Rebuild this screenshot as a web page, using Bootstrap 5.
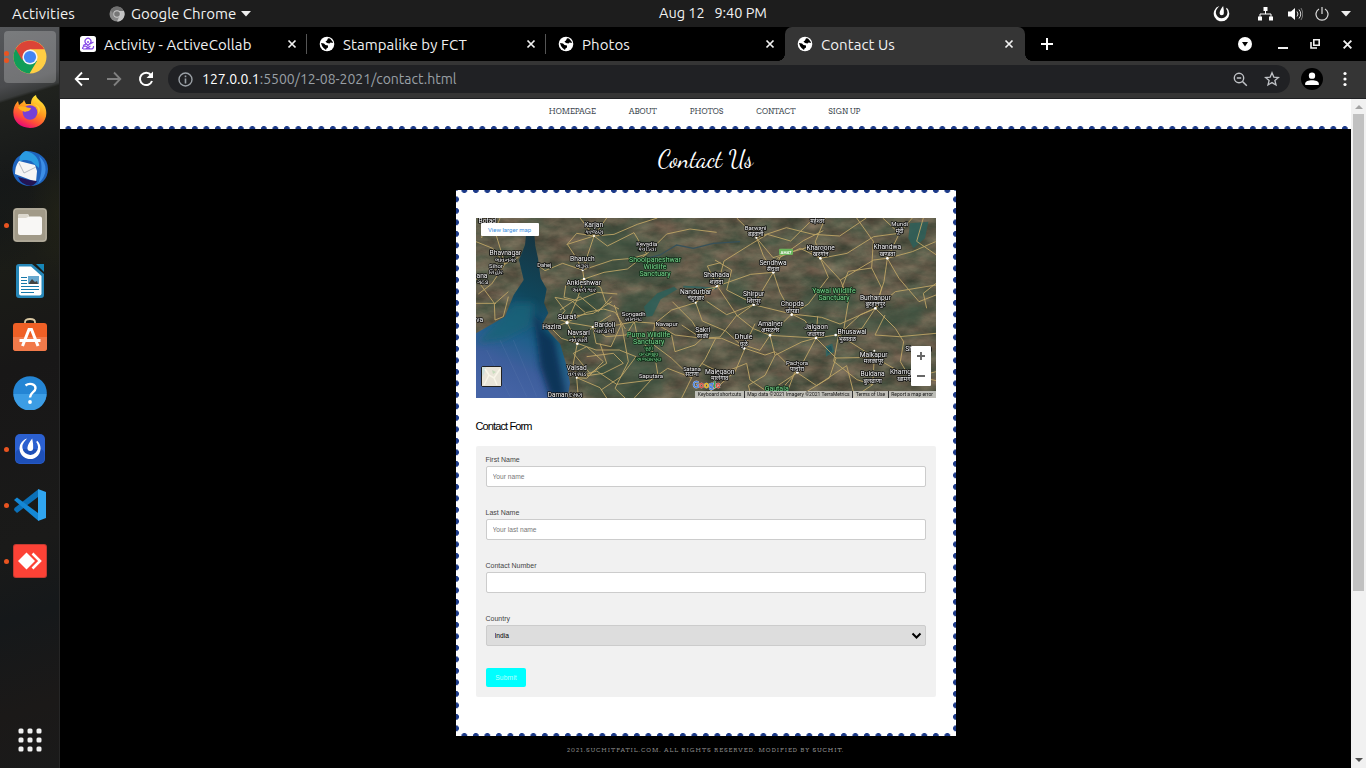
<!DOCTYPE html>
<html lang="en">
<head>
<meta charset="utf-8">
<meta name="viewport" content="width=device-width, initial-scale=1">
<title>Contact Us</title>
<link href="https://cdn.jsdelivr.net/npm/bootstrap@5.3.0/dist/css/bootstrap.min.css" rel="stylesheet">
<style>
  :root { --chrome: #353535; --dot: #1b3988; }
  body { font-family: "Ubuntu", "Noto Sans", "Open Sans", sans-serif; background: #000; line-height: 1; }
  svg { display: block; flex: none; }
  .topbar { height: 27px; background: #1d1d1d; color: #f2f2f2; font-size: 15px; }
  .topbar .clock { left: 659px; top: 6px; white-space: pre; font-size: 14.5px; letter-spacing: -.03px; }
  .appmenu { margin-left: 34px; }
  .tray { padding-right: 15px; }
  .dock { width: 60px; padding-top: 2px; border-right: 1px solid #262626;
    background:
      radial-gradient(ellipse 40px 60px at 0 190px, #14181866, transparent),
      radial-gradient(ellipse 30px 70px at 58px 185px, #2a2a1466, transparent),
      linear-gradient(163deg, #56585b 0, #4a4b4e 58px, #393b3b 70px, #20221e 73px, #1c1e1c 105px, #161818 150px, #1b1c17 230px, #181717 330px, #1a1a19 500px, #15181a 570px, #1b1918 660px, #1a1a1a 100%); }
  .dock-item { height: 56px; flex: none; }
  .dock-item.active::before { content: ""; position: absolute; left: 4px; top: 2px; width: 52px; height: 52px; border-radius: 4px; background: #ffffff38; }
  .dock-item svg { position: relative; }
  .run { position: absolute !important; left: 4px; top: 50%; width: 5px; height: 5px; margin-top: -2.5px; border-radius: 50%; background: #e95420; }
  .run.two { margin-top: -6px; box-shadow: 0 7px #e95420; }
  .tabstrip { height: 34px; background: #000; padding-left: 8px; color: #f1f1f1; font-size: 15px; }
  .tab { width: 239px; padding: 0 10px 0 12px; }
  .tab-sep::after { content: ""; position: absolute; right: 0; top: 7px; width: 1px; height: 20px; background: #555; }
  .tab-title { margin-left: 8px; letter-spacing: .08px; }
  .tab-on { width: 240px; background: var(--chrome); border-radius: 7px 7px 0 0; padding-right: 11px; }
  .tab-on::before, .tab-on::after { content: ""; position: absolute; bottom: 0; width: 7px; height: 7px; }
  .tab-on::before { left: -7px; background: radial-gradient(circle at 0 0, transparent 6.6px, var(--chrome) 7px); }
  .tab-on::after { right: -7px; background: radial-gradient(circle at 100% 0, transparent 6.6px, var(--chrome) 7px); }
  .toolbar { height: 38px; background: var(--chrome); border-bottom: 1px solid #202124; padding: 0 14px 1px; }
  .omni { height: 28px; border-radius: 14px; background: #202124; color: #9aa0a6; font-size: 14px; margin: 0 8px 0 14px; padding: 0 10px; }
  .url { margin-left: 9px; }
  .url b { font-weight: 400; color: #fff; }
  .avatar { width: 28px; height: 28px; background: #000; }
  .site-nav { height: 30px; background: #fff; padding-top: 8px; font: 7.7px "Arvo", "DejaVu Serif", serif; color: #454d55; }
  .dots-bottom { background: radial-gradient(circle at 50% 100%, var(--dot) 2.6px, transparent 3.4px) 2.6px 100% / 11.5px 4px repeat-x #fff; }
  .site-nav a { color: inherit; text-decoration: none; position: absolute; }
  .headline { height: 61px; color: #fff; font: 24.3px "Dancing Script", "Liberation Serif", serif; padding-bottom: 1px; }
  .stamp { width: 500px; height: 546px; padding: 28px 20px 0;
    background:
      radial-gradient(circle at 50% 0, var(--dot) 2.6px, transparent 3.4px) 2.6px 0 / 11.5px 4px repeat-x,
      radial-gradient(circle at 50% 100%, var(--dot) 2.6px, transparent 3.4px) 2.6px 100% / 11.5px 4px repeat-x,
      radial-gradient(circle at 0 50%, var(--dot) 2.6px, transparent 3.4px) 0 3.6px / 4px 11.5px repeat-y,
      radial-gradient(circle at 100% 50%, var(--dot) 2.6px, transparent 3.4px) 100% 3.6px / 4px 11.5px repeat-y, #fff; }
  .map-box { height: 180px; }
  .map-link { left: 5px; top: 5px; width: 58px; height: 13px; font: 6px "Roboto", sans-serif; color: #3a8fe0; border-radius: 1px; }
  .map-zoom { right: 5px; top: 128px; width: 20px; height: 40px; border-radius: 1px; }
  .map-thumb { left: 5px; top: 148px; width: 21px; height: 21px; border: 1px solid #222; border-radius: 2px; }
  .map-credit { right: 0; bottom: 0; height: 7px; font: 5px/7px "Roboto", sans-serif; color: #111; background: #d5d5d2d0; white-space: nowrap; }
  .map-credit span { padding: 0 2.5px; }
  .map-credit span + span { border-left: 1px solid #333; }
  .form-title { font: 11px "Liberation Sans", sans-serif; letter-spacing: -.88px; color: #000; margin: 22px 0 0; height: 26px; }
  .contact-form { background: #f1f1f1; border-radius: 2px; height: 251px; padding: 10px; font: 7px/8px "Liberation Sans", sans-serif; color: #444; }
  .field-block { height: 53px; }
  .contact-form .form-label { font-size: 7px; margin: 0; height: 10px; display: block; }
  .contact-form .form-control, .contact-form .form-select { height: 21px; min-height: 0; font-size: 6.65px; line-height: 8px; padding: 0 6px; border: 1px solid #ccc; border-radius: 2px; color: #000; }
  .contact-form .form-control::placeholder { color: #777; }
  .contact-form .form-select { background-color: #ddd; background-position: right 3px center; background-size: 11px 11px; padding-left: 8px;
    background-image: url("data:image/svg+xml,%3csvg xmlns='http://www.w3.org/2000/svg' viewBox='0 0 11 11'%3e%3cpath fill='none' stroke='%23000' stroke-width='2' d='M1.500 3.500l4 4 4-4'/%3e%3c/svg%3e"); }
  .send { width: 40px; height: 19px; background: #0ff; border: 0; border-radius: 2px; color: #b9ffff; font-size: 6.7px; letter-spacing: .1px; padding: 1px 0 0 1px; }
  .foot { font: 6px "Arvo", "DejaVu Serif", serif; letter-spacing: .97px; color: #858585; margin-top: 10px; white-space: nowrap; }
  .foot a { color: #959595; text-decoration: none; }
  .scroller { width: 15px; background: #f1f1f1; padding: 15px 2px 0; }
  .scroller .thumb { height: 477px; background: #c1c1c1; }
  .scroller i { position: absolute; left: 3.5px; border: 4px solid transparent; }
  .scroller .up { top: 2px; border-bottom-color: #a3a3a3; }
  .scroller .dn { bottom: 2px; border-top-color: #505050; }
</style>
</head>
<body class="vh-100 overflow-hidden d-flex flex-column">
<svg width="0" height="0" class="position-absolute">
  <symbol id="x" viewBox="0 0 10 10"><path d="M1.5 1.5l7 7M8.500 1.500l-7 7" stroke="#f1f1f1" stroke-width="1.700"/></symbol>
  <symbol id="globe" viewBox="0 0 16 16"><circle cx="8" cy="8" r="7.300" fill="#fff"/><path d="M9 2.200l2 .3 2.500 3 .5 1.500-2.500-.5-1 1-2.500-.5-1.500-1.500 1.500-1zM2 7l3 .5 1.500 1.500 2.500.5 0 2-1.500 1-.5 1.500L4.500 12 3 10z" fill="#000"/></symbol>
  <symbol id="swirl" viewBox="0 0 24 24"><path fill-rule="evenodd" d="M9 1.500A11 11 0 1 0 19.500 4L18.500 5.200A8.200 8.200 0 1 1 5.500 5.800Q7 3.500 9 1.500z" fill="#fff"/><path d="M4.500 15.500A8.500 8.500 0 0 0 20.500 14Q21 22 12.500 22.500 6 22 4.500 15.500z" fill="#fff"/><path d="M14.300 1.500Q15.500 7 15.300 11.500a3 3 0 0 1-6 0Q9.500 7.500 14.300 1.500z" fill="#fff"/></symbol>
</svg>

<header class="topbar d-flex align-items-center position-relative ps-2">
  <span class="ms-1" style="letter-spacing:.15px">Activities</span>
  <span class="appmenu d-flex align-items-center">
    <svg width="16" height="16" viewBox="0 0 16 16"><circle cx="8" cy="8" r="7.500" fill="#888"/><path d="M8 5h7A7.500 7.500 0 0 1 8 15.500L11 9z" fill="#c4c4c4"/><path d="M1.500 4A7.500 7.500 0 0 1 14.800 5H8L5 9z" fill="#707070"/><circle cx="8" cy="8" r="3.700" fill="#ccc"/><circle cx="8" cy="8" r="2.800" fill="#777"/></svg>
    <span style="margin-left:6px">Google Chrome</span>
    <svg width="10" height="6" viewBox="0 0 10 6" style="margin-left:5px"><path d="M0 0h10L5 5.500z" fill="#eee"/></svg>
  </span>
  <span class="clock position-absolute">Aug 12   9:40 PM</span>
  <span class="tray ms-auto d-flex align-items-center">
    <svg width="17" height="17" style="margin-right:28px"><use href="#swirl"/></svg>
    <svg width="15" height="14" viewBox="0 0 15 14" style="margin-right:15px"><path d="M5.500 0h4v4h-4zM0 9.500h4v4H0zM11 9.500h4v4h-4z" fill="#fff"/><path d="M7.500 4v3M2 10V7h11v3" fill="none" stroke="#fff"/></svg>
    <svg width="15" height="14" viewBox="0 0 15 14" style="margin-right:12px"><path d="M0 4.500h3L7 1v12L3 9.500H0z" fill="#fff"/><path d="M9 4.500q2 2.500 0 5M11 2.500q3.500 4.500 0 9" fill="none" stroke="#ddd"/><path d="M13 1q3.500 6 0 12" fill="none" stroke="#777"/></svg>
    <svg width="14" height="14" viewBox="0 0 14 14" style="margin-right:12px"><path d="M4 2a6 6 0 1 0 6 0M7 0v7" fill="none" stroke="#ddd" stroke-width="1.200"/></svg>
    <svg width="10" height="6" viewBox="0 0 10 6"><path d="M0 0h10L5 5.500z" fill="#eee"/></svg>
  </span>
</header>

<div class="d-flex flex-grow-1 overflow-hidden">
  <aside class="dock d-flex flex-column flex-shrink-0">
    <div class="dock-item active position-relative d-flex align-items-center justify-content-center"><i class="run two"></i>
      <svg width="34" height="34" viewBox="0 0 34 34"><circle cx="17" cy="17" r="16.500" fill="#ffce44"/><path d="M17 17L2.700 8.700A16.500 16.500 0 0 0 16.500 33.500L24 21z" fill="#109d58"/><path d="M2.700 8.800A16.500 16.500 0 0 1 31.400 9.300H17L9 20z" fill="#db4437"/><circle cx="17" cy="17" r="7.600" fill="#f4f4f4"/><circle cx="17" cy="17" r="6.100" fill="#4285f4"/></svg></div>
    <div class="dock-item position-relative d-flex align-items-center justify-content-center pb-1">
      <svg width="34" height="35" viewBox="0 0 34 35"><defs><linearGradient id="ff" x1=".8" y1="0" x2=".3" y2="1"><stop stop-color="#fff13a"/><stop offset=".45" stop-color="#ff9a1f"/><stop offset=".75" stop-color="#ff4a3a"/><stop offset="1" stop-color="#e5007d"/></linearGradient></defs><path d="M5 7l1 4 4-3 1-2 2 4 5 0c0-6 3-8 5-9 0 5 9 7 10 15 2 11-6 18-16 18S-1 27 .5 16C1 12 3 9 5 7z" fill="url(#ff)"/><circle cx="17" cy="18.500" r="7.300" fill="#7540d8"/><path d="M5 13c4-2 8 1 13 1-1 4-5 3-6 4-2-1-6-2-7-5z" fill="#ffb31f"/><path d="M20 10c5 2 6 6 5 10 4-4 2-9-5-10z" fill="#ffd23a"/></svg></div>
    <div class="dock-item position-relative d-flex align-items-center justify-content-center">
      <svg width="36" height="36" viewBox="0 0 36 36"><path d="M14 0C27 0 36 7 36 18c0 10-7 17-18 17C8 35 1 28 .5 19 .4 12 4 6 9 4c1-2 3-4 5-4z" fill="#1e63bd"/><path d="M14 0c9 2 14 8 13 17l-8-7C14 9 11 8 8 11c-2-4 1-9 6-11z" fill="#2a9be0"/><path d="M27 5c9 8 9 19-1 28 4-10 5-19 1-28z" fill="#3c8ee6"/><path d="M7 10l16 4 2 6-1 11L3 23q0-8 4-13z" fill="#f5f5f5"/><path d="M7 12l5 10 12-6" fill="none" stroke="#b6b9c0"/><path d="M6 26q9 3 19 4-1 3-6 5Q9 34 6 26z" fill="#231553"/></svg></div>
    <div class="dock-item position-relative d-flex align-items-center justify-content-center"><i class="run"></i>
      <svg width="34" height="34" viewBox="0 0 34 34"><rect width="34" height="34" rx="4" fill="#a19a88"/><rect x="1" y="1" width="32" height="32" rx="3" fill="none" stroke="#b9b3a4"/><path d="M5 8q0-2 2-2h7q2 0 2 2.500h11q2 0 2 2V25q0 2-2 2H7q-2 0-2-2z" fill="#f8f7f5"/><path d="M5 9V8q0-2 2-2h7q2 0 2 2.500L13 10H5z" fill="#dcd8ce"/></svg></div>
    <div class="dock-item position-relative d-flex align-items-center justify-content-center">
      <svg width="28" height="34" viewBox="0 0 28 34"><path d="M3 0h13l12 10v21q0 3-3 3H3q-3 0-3-3V3q0-3 3-3z" fill="#2787b8"/><path d="M3 2.500h12L25.500 12v17.500q0 2-2 2H5q-2 0-2-2z" fill="#fff"/><path d="M20 0h8v8z" fill="#1686b7"/><path d="M5 13.500h6M5 16.500h6M5 19.500h6M5 22.500h18M5 25.500h18M5 28.500h13" stroke="#1678aa" stroke-width="1.200"/><path d="M12 12h11v8H12z" fill="#69a9d0"/><path d="M13 19l3-4 3 3 2-1 1 3h-9z" fill="#444"/></svg></div>
    <div class="dock-item position-relative d-flex align-items-center justify-content-center pb-1">
      <svg width="34" height="34" viewBox="0 0 34 34"><path d="M12 8V4q0-3 5-3t5 3v4" fill="none" stroke="#d9c7a2" stroke-width="1.800"/><rect y="5" width="34" height="28" rx="3" fill="#ef6026"/><path d="M0 19h34v11q0 3-3 3H3q-3 0-3-3z" fill="#f27a4a"/><path d="M9.500 28L16 11.500h2.500L25 28M6.500 22.500h21" fill="none" stroke="#fff" stroke-width="3"/></svg></div>
    <div class="dock-item position-relative d-flex align-items-center justify-content-center">
      <svg width="34" height="34" viewBox="0 0 34 34"><circle cx="17" cy="17" r="16.800" fill="#2485d4"/><path d="M.5 18h33A16.500 16.500 0 0 1 .5 18z" fill="#3c9de5"/><path d="M12.500 9.500c4-3 10-1.500 10 2.700 0 4-5.500 4-5.500 9.300" fill="none" stroke="#fff" stroke-width="2.400"/><circle cx="17" cy="26" r="1.900" fill="#fff"/></svg></div>
    <div class="dock-item position-relative d-flex align-items-center justify-content-center"><i class="run"></i>
      <svg width="30" height="30" viewBox="0 0 30 30"><rect width="30" height="30" rx="5" fill="#2b60d0"/><rect x=".5" y="15" width="29" height="14.500" rx="5" fill="#1e50b8"/><use href="#swirl" x="3.500" y="3" width="23" height="23"/></svg></div>
    <div class="dock-item position-relative d-flex align-items-center justify-content-center"><i class="run"></i>
      <svg width="32" height="32" viewBox="0 0 32 32"><path d="M0 21l3 3L24 8V.5L.5 19z" fill="#0b70b8"/><path d="M0 11l3-2.500L24 24v7.500z" fill="#1488d6"/><path d="M24 0l8 3v26l-8 3z" fill="#30a5f0"/></svg></div>
    <div class="dock-item position-relative d-flex align-items-center justify-content-center"><i class="run"></i>
      <svg width="34" height="34" viewBox="0 0 34 34"><rect width="34" height="34" rx="3" fill="#c33a31"/><rect x="1" y="1" width="32" height="32" rx="2" fill="#fc4236"/><path d="M5 17l8.500-8.500L22 17l-8.500 8.500z" fill="#fff"/><path d="M19.500 9.500L27 17l-7.500 7.500" fill="none" stroke="#fff" stroke-width="2.600"/></svg></div>
    <div class="dock-item mt-auto d-flex align-items-center justify-content-center">
      <svg width="24" height="24" viewBox="0 0 24 24" fill="#f2f2f2"><g id="r"><rect x=".5" y=".5" width="5" height="5" rx="1.500"/><rect x="9.500" y=".5" width="5" height="5" rx="1.500"/><rect x="18.500" y=".5" width="5" height="5" rx="1.500"/></g><use href="#r" y="9"/><use href="#r" y="18"/></svg></div>
  </aside>

  <div class="d-flex flex-column flex-grow-1">
    <div class="tabstrip d-flex">
      <div class="tab tab-sep position-relative d-flex align-items-center">
        <svg width="16" height="16" viewBox="0 0 16 16"><rect width="16" height="16" rx="2.500" fill="#fff"/><path d="M8 9.500L5.500 7a3 3 0 1 1 5 0zM6 8L3 9.500M10 8l3.500-2M2.500 13q0-3 3-3l5 3q3.500 0 3-3M5.500 13l5-3M3 13h10" fill="none" stroke="#8447e8" stroke-width="1.200"/><circle cx="8" cy="6" r="1" fill="#8447e8"/></svg>
        <span class="tab-title">Activity - ActiveCollab</span><svg class="ms-auto" width="10" height="10"><use href="#x"/></svg></div>
      <div class="tab tab-sep position-relative d-flex align-items-center"><svg width="16" height="16"><use href="#globe"/></svg><span class="tab-title">Stampalike by FCT</span><svg class="ms-auto" width="10" height="10"><use href="#x"/></svg></div>
      <div class="tab position-relative d-flex align-items-center"><svg width="16" height="16"><use href="#globe"/></svg><span class="tab-title">Photos</span><svg class="ms-auto" width="10" height="10"><use href="#x"/></svg></div>
      <div class="tab tab-on position-relative d-flex align-items-center"><svg width="16" height="16"><use href="#globe"/></svg><span class="tab-title">Contact Us</span><svg class="ms-auto" width="10" height="10"><use href="#x"/></svg></div>
      <svg width="14" height="34" viewBox="0 0 14 34" style="margin-left:15px"><path d="M1 17h12M7 11v12" stroke="#fff" stroke-width="2"/></svg>
      <div class="ms-auto d-flex align-items-center" style="padding-right:13px">
        <svg width="14" height="14" viewBox="0 0 14 14" style="margin-right:26px"><circle cx="7" cy="7" r="7" fill="#fff"/><path d="M4 5h6L7 9.500z" fill="#000"/></svg>
        <svg width="10" height="10" viewBox="0 0 10 10" style="margin-right:22px"><path d="M0 9h10" stroke="#eee" stroke-width="2"/></svg>
        <svg width="10" height="10" viewBox="0 0 10 10" style="margin-right:22px"><path d="M3.800.800h5.400v5.400H3.800zM1 3v6h6" fill="none" stroke="#eee" stroke-width="1.600"/></svg>
        <svg width="11" height="11"><use href="#x"/></svg>
      </div>
    </div>
    <div class="toolbar d-flex align-items-center">
      <svg width="16" height="16" viewBox="0 0 16 16" class="me-3"><path d="M15 8H2M8 1.500L1.700 8 8 14.500" fill="none" stroke="#fff" stroke-width="1.800"/></svg>
      <svg width="16" height="16" viewBox="0 0 16 16" class="me-3"><path d="M1 8h13M8 1.500L14.300 8 8 14.500" fill="none" stroke="#808080" stroke-width="1.800"/></svg>
      <svg width="16" height="16" viewBox="0 0 16 16"><path d="M13 4A6.200 6.200 0 1 0 14 10" fill="none" stroke="#fff" stroke-width="2"/><path d="M15 .5v6.500H8.500z" fill="#fff"/></svg>
      <div class="omni flex-grow-1 d-flex align-items-center">
        <svg width="15" height="15" viewBox="0 0 15 15"><circle cx="7.500" cy="7.500" r="6.500" fill="none" stroke="#9aa0a6" stroke-width="1.400"/><path d="M7.500 3.400v1.800M7.500 6.500v5" stroke="#9aa0a6" stroke-width="1.600"/></svg>
        <span class="url"><b>127.0.0.1</b>:5500/12-08-2021/contact.html</span>
        <svg class="ms-auto" width="15" height="15" viewBox="0 0 15 15"><circle cx="6" cy="6" r="4.700" fill="none" stroke="#c0c3c7" stroke-width="1.400"/><path d="M9.500 9.500l4.300 4.300M3.800 6h4.400" stroke="#c0c3c7" stroke-width="1.500"/></svg>
        <svg class="ms-3" width="16" height="16" viewBox="0 0 16 16"><path d="M8 1.800l1.800 4.300 4.600.4-3.500 3 1.100 4.500L8 11.600 4 14l1.100-4.500-3.500-3 4.600-.4z" fill="none" stroke="#c0c3c7" stroke-width="1.300"/></svg>
      </div>
      <span class="avatar rounded-circle d-flex align-items-center justify-content-center" style="width:22px;height:22px;margin:0 3px"><svg width="20" height="20" viewBox="0 0 22 22"><circle cx="11" cy="7.300" r="3.500" fill="#fff"/><path d="M3.500 17.500v-1.500c0-5 15-5 15 0v1.500z" fill="#fff"/></svg></span>
      <svg width="4" height="16" viewBox="0 0 4 16" style="margin-left:17px" fill="#fff"><circle cx="2" cy="2.500" r="1.600"/><circle cx="2" cy="8" r="1.600"/><circle cx="2" cy="13.500" r="1.600"/></svg>
      <span style="width:5px"></span>
    </div>

    <div class="d-flex flex-grow-1">
      <main class="flex-grow-1 d-flex flex-column align-items-center">
        <nav class="site-nav dots-bottom w-100 d-flex justify-content-center">
          <ul class="nav flex-nowrap list-unstyled m-0" style="padding-left:0">
            <li style="width:80px"><a href="#">HOMEPAGE</a></li><li style="width:61px"><a href="#">ABOUT</a></li><li style="width:66.500px"><a href="#">PHOTOS</a></li><li style="width:72px"><a href="#">CONTACT</a></li><li style="width:34px"><a href="#">SIGN UP</a></li>
          </ul>
        </nav>
        <h1 class="headline m-0 d-flex align-items-center justify-content-center">Contact Us</h1>
        <section class="stamp">
          <div class="map-box position-relative overflow-hidden">
            <svg width="460" height="180" viewBox="18 24 1380 540" font-family="Roboto, Noto Sans, sans-serif">
              <defs>
                <filter id="land" x="0" y="0" width="100%" height="100%" color-interpolation-filters="sRGB"><feTurbulence type="fractalNoise" baseFrequency=".013 .026" numOctaves="6" seed="8"/><feColorMatrix values=".35 .1 0 0 .14  .2 .18 0 0 .165  .18 .14 0 0 .125  0 0 0 0 1"/></filter>
                <linearGradient id="sea" x1=".6" y1="0" x2=".35" y2="1"><stop stop-color="#173541"/><stop offset=".35" stop-color="#10465b"/><stop offset=".62" stop-color="#1f5f8a"/><stop offset=".8" stop-color="#3d5e9c"/><stop offset="1" stop-color="#4664a6"/></linearGradient>
                <filter id="soft"><feGaussianBlur stdDeviation="9"/></filter>
                <clipPath id="gulf"><path id="coast" d="M168 75l-3 30-18 45 14 60-30 45-26 65-87 50v194h274l8-45-10-50-20-68-30-32-22-30 17-30-13-30 8-42-18-32-8-60-8-36-3-34z"/></clipPath>
              </defs>
              <rect x="18" y="24" width="1380" height="540" filter="url(#land)"/>
              <g fill="#33503c" opacity=".5" filter="url(#soft)"><path d="M360 90l90-40 100 50 90 60-100 60-150-20zM440 270l100-20 30 60-90 40zM430 390l170-20-20 190H350zM1000 250l170-10-30 50-150 20zM920 330l210 10-20 60-190-20zM1150 330l230-60-30 70-180 30zM740 210l90 30 70 70-90-20zM230 250l130-60 60 80-20 120-100 60-60-120z"/></g>
              <path d="M530 320l-8-30 40-40 50-20 10 8-50 30-25 50zM1320 40l55-5-10 50-35 30-15-30z" fill="#2d5f59" opacity=".85"/>
              <path d="M530 145l40-10 50-30 50 10 60-15 80-5" fill="none" stroke="#37515a" stroke-width="4"/>
              <path d="M640 230l100 5M1070 410l15-6 5 20-20 12z" stroke="#35645f" stroke-width="5" fill="#24535a"/>
              <use href="#coast" fill="url(#sea)"/>
              <g clip-path="url(#gulf)"><g filter="url(#soft)"><path d="M190 310l60 60 40 190h-50l-30-90z" fill="#0d3459"/><path d="M130 280l60 0-10 70-80 40-80 10z" fill="#1b6378" opacity=".8"/><path d="M215 345l55 50 30 160" fill="none" stroke="#17607b" stroke-width="9"/></g><path d="M90 390l80 170M130 390l70 170M50 420l70 140" stroke="#6380b2" stroke-width="2" opacity=".35"/></g>
              <g fill="none" stroke="#c0a667" stroke-width="2.700" stroke-linejoin="round">
                <path d="M90 24l-15 40 30 98-40 60-40 30M18 95l50 20 37 47M105 162l40-20M18 205l55 75 2 50 25-10 15-60M75 280l40-35M18 280l60 0M45 24l-10 60"/>
                <path d="M330 24l42 54-34 102 4 27-20 60-31 70 31 63-12 60 10 43 5 60M372 78l60-5 70-30 60-19M372 78l-80 25 20 30 26 47M338 180l-60-20-53 22-20-15M338 180l90-30 60-5 42-13 60-60 70-15 80 10"/>
                <path d="M290 105l30-35 52 8M410 24l-38 54 40 30 80-40 38 64M342 207l60-20 70-10 58-45M342 207l-55 20-5 35 40 10 60-25 60 5M342 207l50 25 15 45 40 20"/>
                <path d="M255 262l30 40-20 25 26 10 60-30 50-10 35 10 30 50M255 262l50 10 40 35M270 300l60-40 55 45 40-45M300 320l70-10 55-35M291 337l77 13 74-5 51-10 62 5 60 35 85 10"/>
                <path d="M291 337l-47 18 30 30 48 15 46-50 55-35M368 350l10 50 45 10 30-65-20-60M322 400l56 20 70 0 50 20-45 60-60 40M368 350l40 30 60-5 25-40M310 430l40-20 50 45-50 50-30-2M310 430l50 60 50-30-20-60M350 440l80-10 30 30-60 30-70 10"/>
                <path d="M320 503l60-20 60 40 103-13 50-35 72 28 40-55 32-63M493 335l10 50 50 45 10 60-20 20M455 345l20 110-40 80 30 29M320 503l70 30 20 31M543 510l-50 54M555 340l50-40 72-22 30-40 43-10"/>
                <path d="M555 340l-10 60 60 45 60 58-30 61M605 375l10 50 60-20 22-20-30-50-60-60M677 278l20 55 70 30 55 50M677 278l65-50 20-75 80-50 50-30 70 20 70-69M742 228l-30-60 40-10M742 228l100-35 68-6 20-45 70-50 60-30"/>
                <path d="M742 228l60 90 50-35 58-96-30-50-20-54-60-59M859 83l90-30 80 20 80 5 80-54M859 83l50 60 100-30 45 32M910 187l20 60 35 65-115-28-80 30-60-40M965 312l50-30 60-80-24-57"/>
                <path d="M1051 145l-15-50 30-71M1051 145l80-15 80-50 76-10 40-46M1051 145l60 65 100-60 41-5M1160 24l50 70-5 80 30 60-19 62M1051 145l-60-30-70 30M1252 145l36-75-50-46M1252 145l75-20 70-30M1252 145l35 60 60 70 51-20M1252 145l-10 70-26 80M1205 174l-70 10-35 90M1111 210l25 60-15 90"/>
                <path d="M965 312l-65 64-30 45-45-15 30-65M965 312l90 10 55 20 106-47 60-50 122-20M900 376l138 8 68-10 65-60 45-19M900 376l-50-20-50-40-50 65-55 4M825 415l-30 70-45 39-60 40M825 415l60 20 30-10 60 60-30 79"/>
                <path d="M825 415l-70-30-60 0-60-40M900 376l15 60-30 60-50 30 10 38M915 436l80-40 43-12-55 103-60 40M1038 384l60 60-20 60-100 60M1098 444l115-2 62 35 35 15 88 20M1106 374l-15 80 70 55 47 15M1106 374l107 68-5 82-60 40"/>
                <path d="M1216 295l60 60 25 40-10 60 30 50 77-20M1216 295l-40 60-70 19M1288 380l110-10M1245 315l-30 60 73 5M980 487l60 40 90-60 25 97M980 487l-70 77M695 460l60 30 75-30 10 50 80 54M1038 384l5-65M965 312l40 20 33 52M735 150l50 30-15 60 85 43M1370 295l-10-45 38-30M1360 24l-20 70 58 40"/>
              </g>
              <g fill="#fff"><circle cx="338" cy="180" r="3.500"/><circle cx="342" cy="207" r="3.500"/><circle cx="372" cy="78" r="3"/><circle cx="291" cy="338" r="5"/><circle cx="322" cy="401" r="4"/><circle cx="368" cy="351" r="3"/><circle cx="320" cy="503" r="3"/><circle cx="677" cy="278" r="3"/><circle cx="740" cy="228" r="4"/><circle cx="910" cy="187" r="4"/><circle cx="859" cy="83" r="3"/><circle cx="1051" cy="145" r="4"/><circle cx="1252" cy="145" r="4"/><circle cx="851" cy="284" r="4"/><circle cx="965" cy="314" r="4"/><circle cx="1216" cy="295" r="4"/><circle cx="900" cy="376" r="4"/><circle cx="1038" cy="384" r="4"/><circle cx="1097" cy="375" r="4"/><circle cx="822" cy="415" r="4"/><circle cx="1213" cy="422" r="3"/><circle cx="982" cy="487" r="4"/></g>
              <g font-size="20" text-anchor="middle" fill="#f4f4f4" stroke="#111" stroke-width="5" paint-order="stroke" stroke-linejoin="round">
                <text x="52" y="39">Botad</text><text x="371" y="51">Karjan</text><text x="371" y="72" font-size="18">કરજણ</text>
                <text x="530" y="107" font-size="18">Kevadia</text><text x="530" y="123" font-size="17">કેવડિયા</text>
                <text x="106" y="136">Bhavnagar</text><text x="106" y="156" font-size="18">ભાવનગર</text>
                <text x="78" y="175" font-size="18">Sihor</text><text x="78" y="191" font-size="17">સિહોર</text>
                <text x="223" y="172" font-size="17">Dahej</text><text x="337" y="153">Bharuch</text><text x="337" y="173" font-size="18">ભરૂચ</text>
                <text x="341" y="226">Ankleshwar</text><text x="341" y="245" font-size="18">અંકલેશ્વર</text>
                <text x="36" y="203">ana</text><text x="38" y="223" font-size="18">ગઢડા</text><text x="29" y="335">va</text>
                <text x="291" y="328" font-size="24">Surat</text><text x="245" y="358">Hazira</text>
                <text x="404" y="350">Bardoli</text><text x="404" y="368" font-size="18">બારડોલી</text>
                <text x="326" y="376">Navsari</text><text x="326" y="395" font-size="18">નવસારી</text>
                <text x="491" y="317" font-size="18">Songadh</text><text x="491" y="333" font-size="17">સોનગઢ</text><text x="590" y="347" font-size="18">Navapur</text>
                <text x="320" y="479">Valsad</text><text x="320" y="498" font-size="18">વલસાડ</text><text x="543" y="505" font-size="18">Saputara</text>
                <text x="287" y="561" font-size="19">Daman દમણ</text>
                <text x="677" y="251">Nandurbar</text><text x="677" y="271" font-size="18">नंदुरबार</text>
                <text x="739" y="201">Shahada</text><text x="739" y="222" font-size="18">शहादा</text>
                <text x="698" y="366">Sakri</text><text x="698" y="384" font-size="18">साक्री</text>
                <text x="666" y="482" font-size="17">Satana</text><text x="666" y="498" font-size="17">सटाणा</text>
                <text x="749" y="491">Malegaon</text><text x="749" y="511" font-size="18">मालेगाव</text>
                <text x="857" y="61" font-size="18">Barwani</text><text x="857" y="77" font-size="17">बड़वानी</text>
                <text x="909" y="164">Sendhwa</text><text x="909" y="183" font-size="18">सेंधवा</text>
                <text x="1052" y="121">Khargone</text><text x="1052" y="139" font-size="18">खरगोन</text><text x="1042" y="38" font-size="17">महेश्वर</text>
                <text x="1289" y="49" font-size="18">Mundi</text><text x="1289" y="68" font-size="17">मूंदी</text>
                <text x="1252" y="117">Khandwa</text><text x="1252" y="137" font-size="18">खण्डवा</text>
                <text x="851" y="258">Shirpur</text><text x="851" y="279" font-size="18">शिरपूर</text>
                <text x="967" y="289">Chopda</text><text x="967" y="308" font-size="18">चोपडा</text>
                <text x="1216" y="269">Burhanpur</text><text x="1216" y="289" font-size="18">बुरहानपुर</text>
                <text x="901" y="348">Amalner</text><text x="901" y="366" font-size="18">अमळनेर</text>
                <text x="1038" y="358">Jalgaon</text><text x="1038" y="377" font-size="18">जळगाव</text>
                <text x="1146" y="373">Bhusawal</text><text x="1132" y="392" font-size="18">भुसावळ</text>
                <text x="821" y="388" font-size="21">Dhule</text><text x="821" y="408" font-size="18">धुळे</text>
                <text x="981" y="466" font-size="18">Pachora</text><text x="981" y="482" font-size="18">पाचोरा</text>
                <text x="1211" y="442">Malkapur</text><text x="1211" y="460" font-size="18">मलकापूर</text>
                <text x="1208" y="498">Buldana</text><text x="1208" y="518" font-size="18">बुलढाणा</text>
                <text x="1308" y="492">Khamgaon</text><text x="1309" y="512" font-size="18">खामगाव</text><text x="1345" y="423">Shegaon</text>
              </g>
              <g font-size="21" text-anchor="middle" fill="#77d48b" stroke="#102c18" stroke-width="5" paint-order="stroke" stroke-linejoin="round">
                <text x="555" y="156">Shoolpaneshwar</text><text x="555" y="177">Wildlife</text><text x="555" y="198">Sanctuary</text>
                <text x="536" y="381">Purna Wildlife</text><text x="536" y="402">Sanctuary</text><text x="536" y="420" font-size="16">પૂર્ણા</text><text x="536" y="437" font-size="16">વન્યજીવ</text><text x="536" y="454" font-size="16">અભયારણ્ય</text>
                <text x="1092" y="249">Yawal Wildlife</text><text x="1092" y="270">Sanctuary</text><text x="920" y="542">Gautala</text>
              </g>
              <rect x="927" y="116" width="42" height="19" rx="4" fill="#6bb55b"/><text x="948" y="131" font-size="13" font-weight="700" fill="#fff" text-anchor="middle">AH47</text>
              <text x="668" y="535" font-size="26" font-family="Lato" font-weight="700" stroke="#eee" stroke-width="1.500" paint-order="stroke"><tspan fill="#4285f4">G</tspan><tspan fill="#ea4335">o</tspan><tspan fill="#fbbc05">o</tspan><tspan fill="#4285f4">g</tspan><tspan fill="#34a853">l</tspan><tspan fill="#ea4335">e</tspan></text>
            </svg>
            <a class="map-link position-absolute bg-white d-flex align-items-center justify-content-center text-decoration-none" href="#">View larger map</a>
            <div class="map-thumb position-absolute"><svg width="19" height="19" viewBox="0 0 19 19"><path d="M0 0h19v19H0z" fill="#e9e5d8"/><path d="M0 0h4l-2 7-2 3z" fill="#cfe0dc"/><path d="M2 18L7 8l5 3 6-9M7 8L3 2M12 11l3 7" fill="none" stroke="#f8f5e8" stroke-width="1.500"/><path d="M10 3l4 2-3 2z" fill="#c6dcbc"/></svg></div>
            <div class="map-zoom position-absolute bg-white"><svg width="20" height="40" viewBox="0 0 20 40"><path d="M6 10h8M10 6v8M6 30h8" stroke="#666" stroke-width="1.900"/></svg></div>
            <div class="map-credit position-absolute d-flex"><span>Keyboard shortcuts</span><span>Map data ©2021 Imagery ©2021 TerraMetrics</span><span>Terms of Use</span><span>Report a map error</span></div>
          </div>
          <h2 class="form-title">Contact Form</h2>
          <form class="contact-form">
            <div class="field-block"><label class="form-label" for="fname">First Name</label><input class="form-control" id="fname" placeholder="Your name"></div>
            <div class="field-block"><label class="form-label" for="lname">Last Name</label><input class="form-control" id="lname" placeholder="Your last name"></div>
            <div class="field-block"><label class="form-label" for="phone">Contact Number</label><input class="form-control" id="phone"></div>
            <div class="field-block"><label class="form-label" for="country">Country</label><select class="form-select" id="country"><option>India</option></select></div>
            <button type="button" class="send btn d-block">Submit</button>
          </form>
        </section>
        <footer class="foot">2021.SUCHITPATIL.COM. ALL RIGHTS RESERVED. MODIFIED BY <a href="#">SUCHIT</a>.</footer>
      </main>
      <div class="scroller position-relative flex-shrink-0"><i class="up"></i><div class="thumb"></div><i class="dn"></i></div>
    </div>
  </div>
</div>
<script src="https://cdn.jsdelivr.net/npm/bootstrap@5.3.0/dist/js/bootstrap.bundle.min.js"></script>
</body>
</html>
